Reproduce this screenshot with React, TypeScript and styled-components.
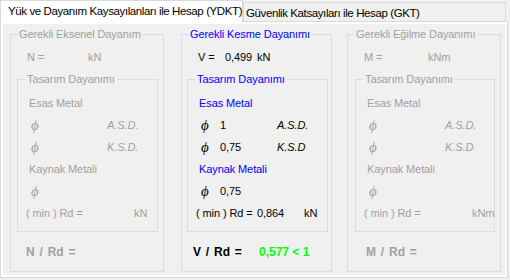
import React from "react";
import styled, { createGlobalStyle } from "styled-components";

const GlobalStyle = createGlobalStyle`
  body {
    margin: 0;
    background: #f0f0f0;
    font-family: "Liberation Sans", Arial, sans-serif;
    font-size: 11px;
    color: #000;
  }
`;

const Window = styled.div`
  width: 508px;
`;

const TabStrip = styled.div`
  display: flex;
  align-items: flex-end;
  height: 21px;
`;

const Tab = styled.div<{ $active?: boolean }>`
  box-sizing: border-box;
  position: relative;
  z-index: ${(p) => (p.$active ? 1 : 0)};
  width: ${(p) => (p.$active ? 243 : 263)}px;
  height: ${(p) => (p.$active ? 22 : 19)}px;
  margin-bottom: ${(p) => (p.$active ? -1 : 0)}px;
  padding: ${(p) => (p.$active ? "1px 0 0 7px" : "1px 0 0 2px")};
  border: 1px solid #d9d9d9;
  border-bottom: none;
  background: ${(p) => (p.$active ? "#ffffff" : "#f0f0f0")};
  font-size: 11.5px;
  line-height: 18px;
  letter-spacing: -0.4px;
  white-space: nowrap;
`;

const Panel = styled.div`
  box-sizing: border-box;
  height: 257px;
  border: 1px solid #d9d9d9;
  padding: 2px;
  background: #ffffff;
`;

const Page = styled.div`
  box-sizing: border-box;
  display: flex;
  height: 100%;
  padding: 4px 0 0 7px;
  background: #f0f0f0;
  letter-spacing: -0.1px;
`;

const GroupBox = styled.fieldset<{ $width: number; $offset: number }>`
  box-sizing: border-box;
  width: ${(p) => p.$width}px;
  min-width: 0;
  margin: 0 0 0 ${(p) => p.$offset}px;
  padding: 0 0 12px;
  border: 1px solid #dcdcdc;
  align-self: flex-start;
`;

const InnerBox = styled.fieldset<{ $width: number; $offset: number }>`
  box-sizing: border-box;
  width: ${(p) => p.$width}px;
  min-width: 0;
  margin: 9px 0 0 ${(p) => p.$offset}px;
  padding: 6px 0 7px;
  border: 1px solid #dcdcdc;
`;

const Legend = styled.legend<{ $color: string; $inset: number }>`
  margin-left: ${(p) => p.$inset}px;
  padding: 0 2px;
  line-height: 13px;
  color: ${(p) => p.$color};
  white-space: nowrap;
`;

const ValueRow = styled.div<{ $color: string; $unitAt: number }>`
  display: grid;
  grid-template-columns: 27px ${(p) => p.$unitAt - 43}px auto;
  height: 13px;
  margin-top: 10px;
  padding-left: 16px;
  line-height: 13px;
  color: ${(p) => p.$color};
  white-space: nowrap;
`;

const SubTitle = styled.div<{ $color: string }>`
  height: 22px;
  padding-left: 11px;
  line-height: 22px;
  color: ${(p) => p.$color};
`;

const FactorRow = styled.div<{ $color: string }>`
  display: grid;
  grid-template-columns: 19px 57px auto;
  align-items: center;
  height: 22px;
  padding-left: 13px;
  line-height: 22px;
  color: ${(p) => p.$color};
`;

const Phi = styled.span`
  font-family: "Liberation Serif", "DejaVu Serif", serif;
  font-style: italic;
  font-size: 15px;
  line-height: 22px;
`;

const Method = styled.span`
  font-style: italic;
`;

const ResultRow = styled.div<{ $color: string }>`
  display: grid;
  grid-template-columns: 61px 47px auto;
  height: 22px;
  padding-left: 8px;
  line-height: 22px;
  color: ${(p) => p.$color};
  white-space: nowrap;
`;

const RatioRow = styled.div<{ $color: string; $indent: number }>`
  display: grid;
  grid-template-columns: 66px auto;
  height: 14px;
  margin-top: 13px;
  padding-left: ${(p) => p.$indent}px;
  font-size: 12px;
  font-weight: bold;
  line-height: 14px;
  letter-spacing: 0;
  word-spacing: 1.5px;
  color: ${(p) => p.$color};
  white-space: nowrap;
`;

const Verdict = styled.span`
  color: #00ff00;
  word-spacing: 0;
`;

const GRAY = "#a0a0a0";
const BLUE = "#0000ff";

interface Column {
  title: string;
  symbol: string;
  value?: string;
  unit: string;
  unitAt: number;
  asd?: string;
  ksd?: string;
  ksdLabel: string;
  weld?: string;
  rd?: string;
  ratio: string;
  ratioIndent: number;
  verdict?: string;
  width: number;
  offset: number;
  innerWidth: number;
  innerOffset: number;
  active: boolean;
}

const columns: Column[] = [
  {
    title: "Gerekli Eksenel Dayanım",
    symbol: "N =",
    unit: "kN",
    unitAt: 77,
    ksdLabel: "K.S.D.",
    ratio: "N / Rd =",
    ratioIndent: 15,
    width: 154,
    offset: 0,
    innerWidth: 141,
    innerOffset: 6,
    active: false,
  },
  {
    title: "Gerekli Kesme Dayanımı",
    symbol: "V =",
    value: "0,499",
    unit: "kN",
    unitAt: 75,
    asd: "1",
    ksd: "0,75",
    ksdLabel: "K.S.D",
    weld: "0,75",
    rd: "0,864",
    ratio: "V / Rd =",
    ratioIndent: 11,
    verdict: "0,577 < 1",
    width: 151,
    offset: 17,
    innerWidth: 141,
    innerOffset: 5,
    active: true,
  },
  {
    title: "Gerekli Eğilme Dayanımı",
    symbol: "M =",
    unit: "kNm",
    unitAt: 80,
    ksdLabel: "K.S.D",
    ratio: "M / Rd =",
    ratioIndent: 18,
    width: 154,
    offset: 15,
    innerWidth: 140,
    innerOffset: 7,
    active: false,
  },
];

function ResistanceGroup({ col }: { col: Column }) {
  const text = col.active ? "#000000" : GRAY;
  const accent = col.active ? BLUE : GRAY;

  return (
    <GroupBox $width={col.width} $offset={col.offset}>
      <Legend $color={accent} $inset={6}>
        {col.title}
      </Legend>
      <ValueRow $color={text} $unitAt={col.unitAt}>
        <span>{col.symbol}</span>
        <span>{col.value}</span>
        <span>{col.unit}</span>
      </ValueRow>

      <InnerBox $width={col.innerWidth} $offset={col.innerOffset}>
        <Legend $color={accent} $inset={7}>
          Tasarım Dayanımı
        </Legend>
        <SubTitle $color={accent}>Esas Metal</SubTitle>
        <FactorRow $color={text}>
          <Phi>ϕ</Phi>
          <span>{col.asd}</span>
          <Method>A.S.D.</Method>
        </FactorRow>
        <FactorRow $color={text}>
          <Phi>ϕ</Phi>
          <span>{col.ksd}</span>
          <Method>{col.ksdLabel}</Method>
        </FactorRow>
        <SubTitle $color={accent}>Kaynak Metali</SubTitle>
        <FactorRow $color={text}>
          <Phi>ϕ</Phi>
          <span>{col.weld}</span>
          <span />
        </FactorRow>
        <ResultRow $color={text}>
          <span>( min ) Rd =</span>
          <span>{col.rd}</span>
          <span>{col.unit}</span>
        </ResultRow>
      </InnerBox>

      <RatioRow $color={text} $indent={col.ratioIndent}>
        <span>{col.ratio}</span>
        <Verdict>{col.verdict}</Verdict>
      </RatioRow>
    </GroupBox>
  );
}

export default function App() {
  return (
    <>
      <GlobalStyle />
      <Window>
        <TabStrip>
          <Tab $active>Yük ve Dayanım Kaysayılanları ile Hesap (YDKT)</Tab>
          <Tab>Güvenlik Katsayıları ile Hesap (GKT)</Tab>
        </TabStrip>
        <Panel>
          <Page>
            {columns.map((col) => (
              <ResistanceGroup key={col.symbol} col={col} />
            ))}
          </Page>
        </Panel>
      </Window>
    </>
  );
}
